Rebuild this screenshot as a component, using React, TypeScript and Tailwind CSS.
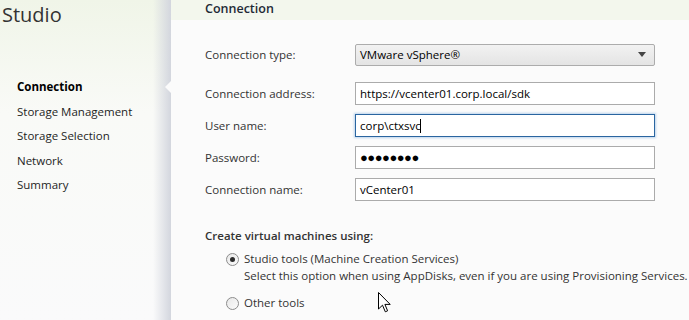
import React from "react";

const font = { fontFamily: '"Open Sans", "Noto Sans", sans-serif' };

function Field({ label, children }: { label: string; children: React.ReactNode }) {
  return (
    <div className="flex h-[23px] items-center">
      <div className="w-[150px] text-[11.5px] text-[#333]">{label}</div>
      {children}
    </div>
  );
}

function TextBox({ value, focused }: { value: React.ReactNode; focused?: boolean }) {
  return (
    <div
      className={
        focused
          ? "flex h-[23px] w-[300px] items-center border border-[#2a65a0] bg-white pl-[4px] text-[11.5px] text-black shadow-[0_0_2px_1px_#bcd4ec]"
          : "flex h-[23px] w-[300px] items-center border border-[#ababab] bg-white pl-[4px] text-[11.5px] text-black"
      }
    >
      {value}
    </div>
  );
}

function Radio({ checked }: { checked?: boolean }) {
  return (
    <span className="flex h-[13px] w-[13px] items-center justify-center rounded-full border border-[#8c8c8c] bg-gradient-to-br from-[#e8e8e8] to-[#fbfbfb]">
      {checked && <span className="h-[5px] w-[5px] rounded-full bg-[#2b2b2b]" />}
    </span>
  );
}

export default function App() {
  const nav = ["Connection", "Storage Management", "Storage Selection", "Network", "Summary"];
  return (
    <div className="flex h-[320px] w-[689px] overflow-hidden text-[#222]" style={font}>
      <aside className="relative w-[171px] shrink-0 bg-gradient-to-b from-[#f0f5e8] via-[#f9faf7] via-35% to-[#fafafb]">
        <div className="absolute right-0 top-0 h-full w-[18px] bg-gradient-to-r from-transparent to-[#d3d6de]" />
        <h1 className="pl-[2px] pt-[2px] text-[20px] leading-[26px] text-[#333]">Studio</h1>
        <ul className="mt-[47px] pl-[17px] text-[11.5px]">
          {nav.map((n, i) => (
            <li key={n} className={i === 0 ? "h-[24.5px] leading-[24.5px] font-bold text-black" : "h-[24.5px] leading-[24.5px] text-[#1e1e1e]"}>
              {n}
            </li>
          ))}
        </ul>
      </aside>

      <main className="relative flex-1 bg-[#fbfbfb]">
        {/* selection notch */}
        <span className="absolute left-[-6px] top-[81px] h-0 w-0 border-y-[6px] border-r-[6px] border-y-transparent border-r-[#fbfbfb]" />

        <div className="h-[20px] bg-[#f3f7ed] pl-[34px] text-[12.5px] font-semibold leading-[17px] text-[#1e2a36]">
          Connection
        </div>

        <div className="pl-[34px]">
          <div className="mt-[23px]">
            <Field label="Connection type:">
              <div className="flex h-[22px] w-[300px] items-center justify-between rounded-[2px] border border-[#acacac] bg-gradient-to-b from-[#f2f2f2] to-[#e4e4e4] pl-[4px] pr-[8px] text-[11.5px] text-black">
                <span>VMware vSphere®</span>
                <svg width="8" height="5" viewBox="0 0 8 5">
                  <path d="M0 0h8L4 5z" fill="#444" />
                </svg>
              </div>
            </Field>
          </div>

          <div className="mt-[16px] flex flex-col gap-[9px]">
            <Field label="Connection address:">
              <TextBox value="https://vcenter01.corp.local/sdk" />
            </Field>
            <Field label="User name:">
              <TextBox
                focused
                value={
                  <>
                    <span>corp\ctxsvc</span>
                    <span className="ml-[-1px] h-[14px] w-px bg-black" />
                  </>
                }
              />
            </Field>
            <Field label="Password:">
              <TextBox value={<span className="text-[13px] font-bold tracking-[-0.5px]">●●●●●●●●</span>} />
            </Field>
            <Field label="Connection name:">
              <TextBox value="vCenter01" />
            </Field>
          </div>

          <div className="mt-[27px] text-[11.5px] font-semibold leading-[16px] text-[#333]">
            Create virtual machines using:
          </div>
          <div className="mt-[7px] pl-[21px] text-[11.5px] leading-[16px] text-[#333]">
            <label className="flex items-center gap-[5px]">
              <Radio checked />
              <span>Studio tools (Machine Creation Services)</span>
            </label>
            <div className="mt-[1px] pl-[18px]">
              Select this option when using AppDisks, even if you are using Provisioning Services.
            </div>
            <label className="mt-[11px] flex items-center gap-[5px]">
              <Radio />
              <span>Other tools</span>
            </label>
          </div>
        </div>

        {/* mouse pointer */}
        <svg className="absolute left-[207px] top-[292px]" width="13" height="21" viewBox="0 0 13 21">
          <path d="M0.5 0.5V17L4.5 13.2L7.3 19.8L9.6 18.8L6.9 12.4H12.2Z" fill="#fff" stroke="#000" strokeWidth="1" strokeLinejoin="miter" />
        </svg>
      </main>
    </div>
  );
}
